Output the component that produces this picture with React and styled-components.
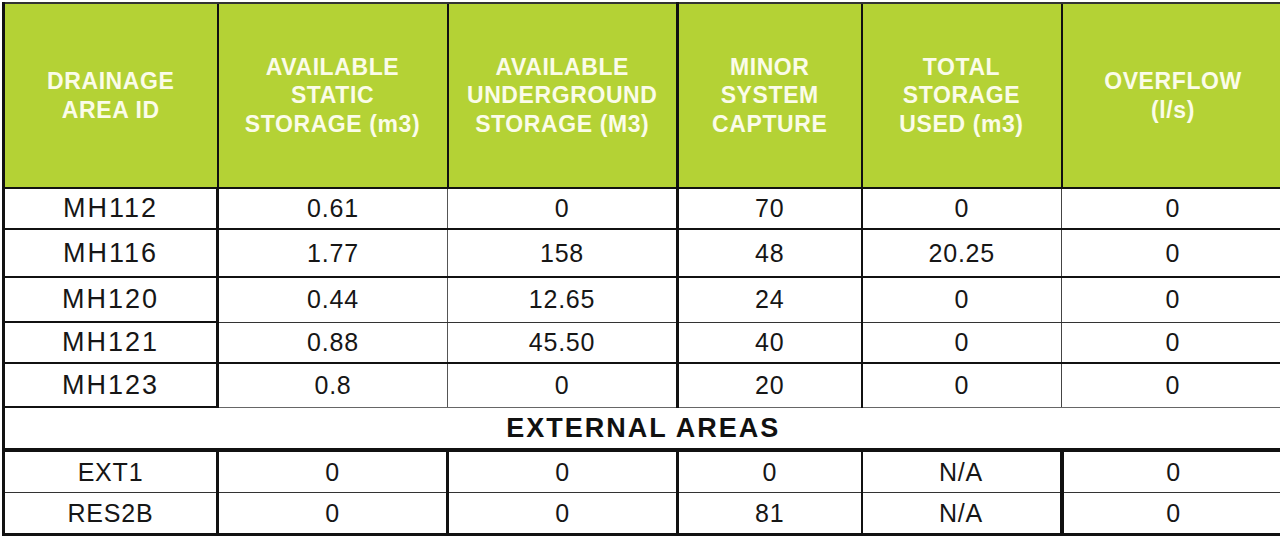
import React from "react";
import styled, { createGlobalStyle } from "styled-components";

const GlobalStyle = createGlobalStyle`
  html, body {
    margin: 0;
    padding: 0;
    background: #ffffff;
  }
  body {
    font-family: "Liberation Sans", Arial, sans-serif;
    overflow: hidden;
  }
`;

const Page = styled.div`
  width: 1280px;
  height: 538px;
  overflow: hidden;
  padding: 2px 0 0 2px;
  box-sizing: border-box;
`;

const Table = styled.table`
  border-collapse: collapse;
  table-layout: fixed;
  width: 1280px;
`;

const HeadCell = styled.th`
  height: ${(p) => p.$h}px;
  padding: 0 4px;
  background: #b4d235;
  color: #fbfce9;
  font-size: 23px;
  font-weight: 700;
  letter-spacing: 0.6px;
  line-height: 28.5px;
  text-align: center;
  vertical-align: middle;
  white-space: nowrap;
  border-top: 2px solid #333;
  border-bottom: 2px solid #111;
  border-left: ${(p) => p.$left};
  border-right: ${(p) => p.$right || "none"};
`;

const Cell = styled.td`
  height: ${(p) => p.$h}px;
  padding: 0;
  color: #161616;
  font-size: ${(p) => (p.$big ? 27 : 25)}px;
  letter-spacing: ${(p) => (p.$big ? 2 : 0.8)}px;
  line-height: 1;
  text-align: center;
  vertical-align: middle;
  white-space: nowrap;
  border-left: ${(p) => p.$left};
  border-right: ${(p) => p.$right || "none"};
  border-bottom: ${(p) => p.$bottom};
`;

const SectionCell = styled.td`
  height: ${(p) => p.$h}px;
  padding: 0;
  color: #111;
  font-size: 27px;
  font-weight: 700;
  letter-spacing: 2px;
  text-align: center;
  vertical-align: middle;
  border-top: 1px solid #777;
  border-left: 3px solid #111;
  border-right: 4px solid #111;
  border-bottom: 4px solid #111;
`;

const WIDTHS = [214, 230, 230, 184, 200, 222];

const HEAD_LINES = [
  "3px solid #111",
  "2px solid #111",
  "2px solid #111",
  "3px solid #111",
  "2px solid #111",
  "2px solid #111",
];

const MH_LINES = [
  "3px solid #111",
  "3px solid #111",
  "1px solid #555",
  "3px solid #111",
  "2px solid #111",
  "1px solid #444",
];

const EXT_LINES = [
  "3px solid #111",
  "3px solid #111",
  "3px solid #111",
  "3px solid #111",
  "2px solid #111",
  "4px solid #111",
];

const HEADERS = [
  ["DRAINAGE", "AREA ID"],
  ["AVAILABLE", "STATIC", "STORAGE (m3)"],
  ["AVAILABLE", "UNDERGROUND", "STORAGE (M3)"],
  ["MINOR", "SYSTEM", "CAPTURE"],
  ["TOTAL", "STORAGE", "USED (m3)"],
  ["OVERFLOW", "(l/s)"],
];

const MH_ROWS = [
  { h: 39, sep: "2px solid #111", v: ["MH112", "0.61", "0", "70", "0", "0"] },
  { h: 46, sep: "2px solid #111", v: ["MH116", "1.77", "158", "48", "20.25", "0"] },
  { h: 43, sep: "1px solid #333", v: ["MH120", "0.44", "12.65", "24", "0", "0"] },
  { h: 39, sep: "2px solid #111", v: ["MH121", "0.88", "45.50", "40", "0", "0"] },
  { h: 42, sep: "1px solid #666", v: ["MH123", "0.8", "0", "20", "0", "0"] },
];

const EXT_ROWS = [
  { h: 40, sep: "1px solid #333", v: ["EXT1", "0", "0", "0", "N/A", "0"] },
  { h: 40, sep: "3px solid #111", v: ["RES2B", "0", "0", "81", "N/A", "0"] },
];

export default function App() {
  return (
    <>
      <GlobalStyle />
      <Page>
        <Table>
          <colgroup>
            {WIDTHS.map((w, i) => (
              <col key={i} style={{ width: w }} />
            ))}
          </colgroup>
          <thead>
            <tr>
              {HEADERS.map((lines, i) => (
                <HeadCell key={i} $h={183} $left={HEAD_LINES[i]}>
                  {lines.map((l, j) => (
                    <div key={j}>{l}</div>
                  ))}
                </HeadCell>
              ))}
            </tr>
          </thead>
          <tbody>
            {MH_ROWS.map((row) => (
              <tr key={row.v[0]}>
                {row.v.map((val, i) => (
                  <Cell
                    key={i}
                    $h={row.h}
                    $big={i === 0}
                    $left={MH_LINES[i]}
                    $bottom={i === 0 ? "2px solid #111" : row.sep}
                  >
                    {val}
                  </Cell>
                ))}
              </tr>
            ))}
            <tr>
              <SectionCell colSpan={6} $h={40}>
                EXTERNAL AREAS
              </SectionCell>
            </tr>
            {EXT_ROWS.map((row) => (
              <tr key={row.v[0]}>
                {row.v.map((val, i) => (
                  <Cell
                    key={i}
                    $h={row.h}
                    $left={EXT_LINES[i]}
                    $bottom={row.sep}
                  >
                    {val}
                  </Cell>
                ))}
              </tr>
            ))}
          </tbody>
        </Table>
      </Page>
    </>
  );
}
